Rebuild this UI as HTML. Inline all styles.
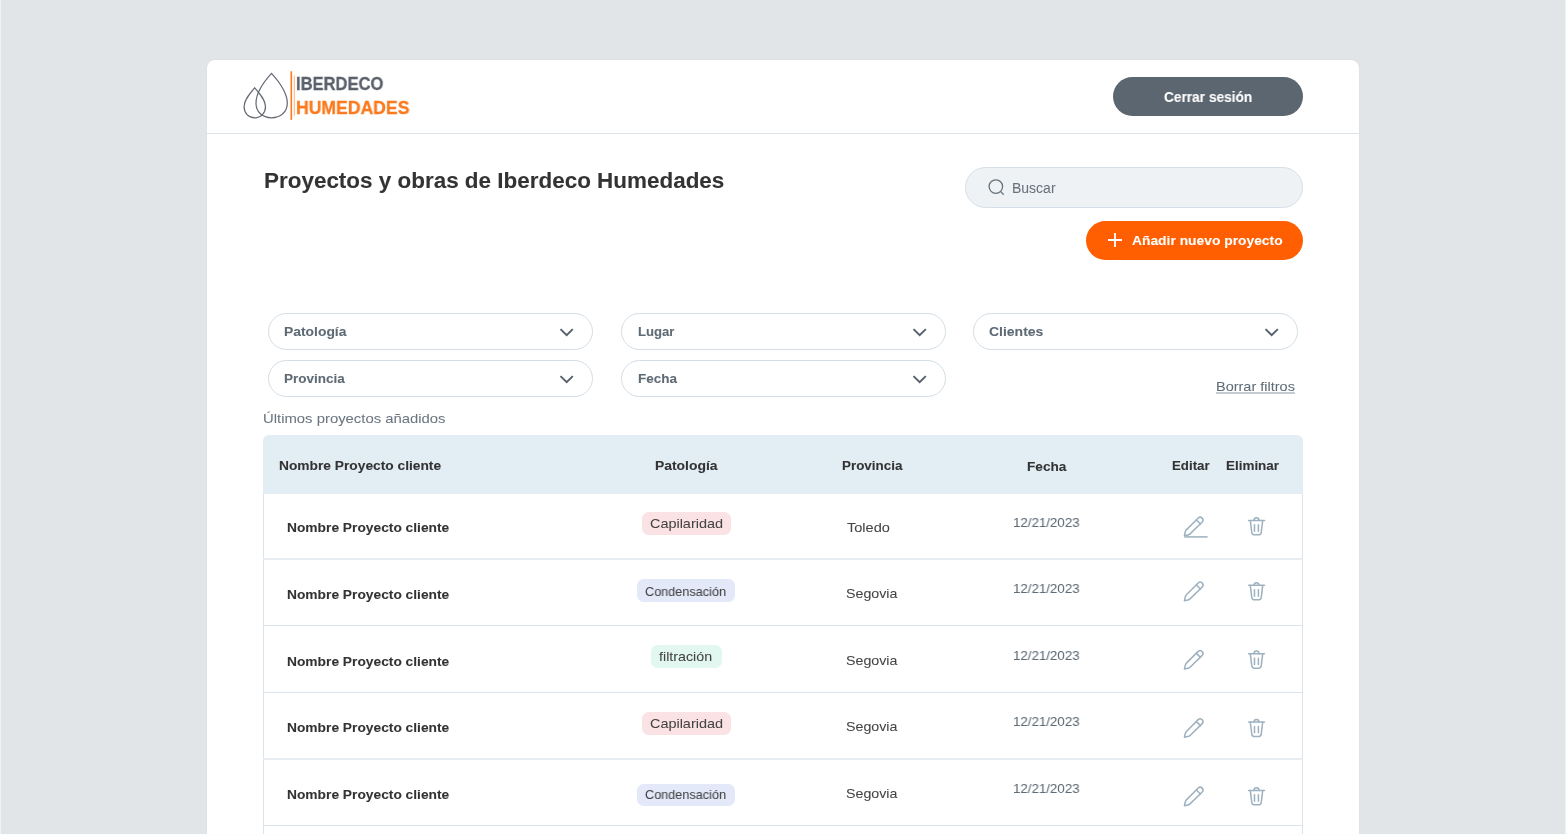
<!DOCTYPE html>
<html><head><meta charset="utf-8">
<style>
html,body{margin:0;padding:0;}
body{width:1566px;height:835px;overflow:hidden;background:#e1e5e8;position:relative;font-family:"Liberation Sans",sans-serif;}
.a{position:absolute;white-space:nowrap;}
.t{line-height:0;will-change:transform;}
.b{font-weight:bold;}
#card{position:absolute;left:207px;top:60px;width:1152px;height:800px;background:#fff;border-radius:8px;box-shadow:0 0 1.5px rgba(0,0,0,0.07);}
#hdrline{position:absolute;left:207px;top:133px;width:1152px;height:1px;background:#dde4ea;}
.btn-dark{position:absolute;left:1113px;top:77px;width:190px;height:39px;border-radius:20px;background:#5c6670;}
.search{position:absolute;left:965px;top:167px;width:336px;height:39px;border-radius:21px;background:#eef2f5;border:1px solid #d6dfe7;}
.btn-or{position:absolute;left:1086px;top:221px;width:217px;height:39px;border-radius:20px;background:#ff5f00;}
.flt{position:absolute;width:323px;height:35px;border:1px solid #d5dee6;border-radius:19px;background:#fff;}
.th{position:absolute;left:263px;top:435px;width:1040px;height:59px;background:#e2edf4;border-radius:6px 6px 0 0;}
.vl{position:absolute;top:494px;width:1px;height:340px;background:#dbe4ec;}
.hl{position:absolute;left:263px;width:1040px;height:1px;background:#dbe4ec;}
.pill{position:absolute;border-radius:6.5px;}
</style></head>
<body>
<div id="card"></div>
<div id="hdrline"></div>
<svg class="a" style="left:240px;top:68px" width="60" height="56" viewBox="0 0 60 56">
  <path d="M31.5 5.4 C25 12.5 16 24.5 16 35.2 C16 44 22.5 49.8 31.5 49.8 C40.5 49.8 47.3 44 47.3 35.2 C47.3 24.5 38 12.5 31.5 5.4 Z" fill="none" stroke="#666a74" stroke-width="1.25"/>
  <path d="M14.7 19.8 C10 25.5 4.1 31.5 4.1 38.8 C4.1 45 8.5 49.8 14.7 49.8 C21 49.8 25.5 45 25.5 38.8 C25.5 31.5 19.5 25.5 14.7 19.8 Z" fill="none" stroke="#666a74" stroke-width="1.25"/>
  <rect x="50.5" y="3.3" width="1.6" height="48.6" fill="#ff7a1f"/>
  <rect x="53.8" y="7.5" width="1" height="40.2" fill="#ffb27a"/>
</svg>
<div class="btn-dark"></div>
<div class="search"></div>
<svg class="a" style="left:986px;top:177px" width="20" height="20" viewBox="0 0 20 20">
  <circle cx="9.85" cy="9.6" r="6.75" fill="none" stroke="#68727b" stroke-width="1.3"/>
  <path d="M14.7 14.6 L17.3 17.3" stroke="#68727b" stroke-width="1.3" stroke-linecap="round"/>
</svg>
<div class="btn-or"></div>
<svg class="a" style="left:1106px;top:231px" width="18" height="18" viewBox="0 0 18 18">
  <path d="M9 2 V16 M2 9 H16" stroke="#fff" stroke-width="1.8"/>
</svg>
<div class="flt" style="left:268px;top:313px"></div>
<div class="flt" style="left:621px;top:313px"></div>
<div class="flt" style="left:973px;top:313px"></div>
<div class="flt" style="left:268px;top:360px"></div>
<div class="flt" style="left:621px;top:360px"></div>
<svg class="a" style="left:559px;top:328px" width="16" height="11" viewBox="0 0 16 11"><path d="M1.5 1.1 L7.65 7.1 L13.8 1.1" fill="none" stroke="#56616b" stroke-width="2"/></svg>
<svg class="a" style="left:912px;top:328px" width="16" height="11" viewBox="0 0 16 11"><path d="M1.5 1.1 L7.65 7.1 L13.8 1.1" fill="none" stroke="#56616b" stroke-width="2"/></svg>
<svg class="a" style="left:1264px;top:328px" width="16" height="11" viewBox="0 0 16 11"><path d="M1.5 1.1 L7.65 7.1 L13.8 1.1" fill="none" stroke="#56616b" stroke-width="2"/></svg>
<svg class="a" style="left:559px;top:375px" width="16" height="11" viewBox="0 0 16 11"><path d="M1.5 1.1 L7.65 7.1 L13.8 1.1" fill="none" stroke="#56616b" stroke-width="2"/></svg>
<svg class="a" style="left:912px;top:375px" width="16" height="11" viewBox="0 0 16 11"><path d="M1.5 1.1 L7.65 7.1 L13.8 1.1" fill="none" stroke="#56616b" stroke-width="2"/></svg>
<div class="th"></div>
<div class="vl" style="left:263px"></div>
<div class="vl" style="left:1302px"></div>
<div class="hl" style="top:558px;background:#e6ecf1"></div><div class="hl" style="top:559px;background:#e9eef3"></div>
<div class="hl" style="top:625px"></div>
<div class="hl" style="top:692px"></div>
<div class="hl" style="top:758px;background:#e6ecf1"></div><div class="hl" style="top:759px;background:#e9eef3"></div>
<div class="hl" style="top:825px"></div>
<div class="pill" style="left:642.0px;top:512.0px;width:89.0px;height:23.0px;background:#fbe3e5"></div>
<div class="pill" style="left:637.0px;top:579.0px;width:98.0px;height:23.0px;background:#e3e9f9"></div>
<div class="pill" style="left:651.0px;top:645.0px;width:71.0px;height:23.0px;background:#e2f7f0"></div>
<div class="pill" style="left:642.0px;top:712.0px;width:89.0px;height:23.0px;background:#fbe3e5"></div>
<div class="pill" style="left:637.0px;top:784.0px;width:98.0px;height:22.0px;background:#e3e9f9"></div>
<div class="a t b" id="iber" style="left:296.00px;top:84.18px;font-size:18.8px;color:#5b606b;transform:scaleX(0.881);transform-origin:0 0;-webkit-text-stroke:0.3px #5b606b;">IBERDECO</div>
<div class="a t b" id="hum" style="left:295.80px;top:108.15px;font-size:18.6px;color:#fb7a1e;transform:scaleX(0.946);transform-origin:0 0;-webkit-text-stroke:0.3px #fb7a1e;">HUMEDADES</div>
<div class="a t b" id="cerrar" style="left:1163.50px;top:96.75px;font-size:14.0px;color:#fff;transform:scaleX(0.9767);transform-origin:0 0;-webkit-text-stroke:0.08px #fff;">Cerrar sesión</div>
<div class="a t b" id="title" style="left:264.20px;top:180.55px;font-size:21.2px;color:#333;transform:scaleX(1.0594);transform-origin:0 0;-webkit-text-stroke:0.08px #333;">Proyectos y obras de Iberdeco Humedades</div>
<div class="a t" id="buscar" style="left:1012.40px;top:188.15px;font-size:14.0px;color:#68727b;transform:scaleX(0.9931);transform-origin:0 0;-webkit-text-stroke:0.05px #68727b;">Buscar</div>
<div class="a t b" id="add" style="left:1131.69px;top:240.76px;font-size:13.1px;color:#fff;transform:scaleX(1.0561);transform-origin:0 0;-webkit-text-stroke:0.08px #fff;">Añadir nuevo proyecto</div>
<div class="a t b" id="f1" style="left:284.10px;top:331.76px;font-size:13.1px;color:#5e6a74;transform:scaleX(1.0592);transform-origin:0 0;-webkit-text-stroke:0.08px #5e6a74;">Patología</div>
<div class="a t b" id="f2" style="left:637.70px;top:331.76px;font-size:13.1px;color:#5e6a74;transform:scaleX(1.0027);transform-origin:0 0;-webkit-text-stroke:0.08px #5e6a74;">Lugar</div>
<div class="a t b" id="f3" style="left:989.00px;top:331.76px;font-size:13.1px;color:#5e6a74;transform:scaleX(1.0668);transform-origin:0 0;-webkit-text-stroke:0.08px #5e6a74;">Clientes</div>
<div class="a t b" id="f4" style="left:284.10px;top:379.16px;font-size:13.1px;color:#5e6a74;transform:scaleX(1.0321);transform-origin:0 0;-webkit-text-stroke:0.08px #5e6a74;">Provincia</div>
<div class="a t b" id="f5" style="left:637.70px;top:379.16px;font-size:13.1px;color:#5e6a74;transform:scaleX(1.0316);transform-origin:0 0;-webkit-text-stroke:0.08px #5e6a74;">Fecha</div>
<div class="a t" id="borrar" style="left:1215.90px;top:386.92px;font-size:13.2px;color:#5f6b75;transform:scaleX(1.0987);transform-origin:0 0;-webkit-text-stroke:0.05px #5f6b75;text-decoration:underline;text-decoration-color:#c6ccd2;text-decoration-thickness:1.8px;text-underline-offset:1px;">Borrar filtros</div>
<div class="a t" id="ult" style="left:263.20px;top:418.86px;font-size:13.1px;color:#6b7680;transform:scaleX(1.1349);transform-origin:0 0;-webkit-text-stroke:0.05px #6b7680;">Últimos proyectos añadidos</div>
<div class="a t b" id="h1" style="left:278.50px;top:465.92px;font-size:13.2px;color:#333;transform:scaleX(1.0431);transform-origin:0 0;-webkit-text-stroke:0.08px #333;">Nombre Proyecto cliente</div>
<div class="a t b" id="h2" style="left:655.03px;top:465.92px;font-size:13.2px;color:#333;transform:scaleX(1.0537);transform-origin:0 0;-webkit-text-stroke:0.08px #333;">Patología</div>
<div class="a t b" id="h3" style="left:841.69px;top:465.92px;font-size:13.2px;color:#333;transform:scaleX(1.0169);transform-origin:0 0;-webkit-text-stroke:0.08px #333;">Provincia</div>
<div class="a t b" id="h4" style="left:1027.03px;top:466.92px;font-size:13.2px;color:#333;transform:scaleX(1.0339);transform-origin:0 0;-webkit-text-stroke:0.08px #333;">Fecha</div>
<div class="a t b" id="h5" style="left:1172.00px;top:465.92px;font-size:13.2px;color:#333;transform:scaleX(1.0080);transform-origin:0 0;-webkit-text-stroke:0.08px #333;">Editar</div>
<div class="a t b" id="h6" style="left:1225.60px;top:465.92px;font-size:13.2px;color:#333;transform:scaleX(1.0192);transform-origin:0 0;-webkit-text-stroke:0.08px #333;">Eliminar</div>
<div class="a t b" id="nm0" style="left:286.80px;top:527.76px;font-size:13.1px;color:#333;transform:scaleX(1.0518);transform-origin:0 0;-webkit-text-stroke:0.08px #333;">Nombre Proyecto cliente</div>
<div class="a t" id="pt0" style="left:649.50px;top:523.79px;font-size:13.0px;color:#444;transform:scaleX(1.1096);transform-origin:0 0;-webkit-text-stroke:0.05px #444;">Capilaridad</div>
<div class="a t" id="pv0" style="left:846.70px;top:527.66px;font-size:13.1px;color:#444;transform:scaleX(1.1114);transform-origin:0 0;-webkit-text-stroke:0.05px #444;">Toledo</div>
<div class="a t" id="dt0" style="left:1013.31px;top:523.08px;font-size:13.6px;color:#5f6b75;transform:scaleX(0.9784);transform-origin:0 0;-webkit-text-stroke:0.05px #5f6b75;">12/21/2023</div>
<div class="a t b" id="nm1" style="left:286.80px;top:594.96px;font-size:13.1px;color:#333;transform:scaleX(1.0518);transform-origin:0 0;-webkit-text-stroke:0.08px #333;">Nombre Proyecto cliente</div>
<div class="a t" id="pt1" style="left:644.70px;top:591.59px;font-size:13.0px;color:#444;transform:scaleX(0.9747);transform-origin:0 0;-webkit-text-stroke:0.05px #444;">Condensación</div>
<div class="a t" id="pv1" style="left:846.00px;top:594.06px;font-size:13.1px;color:#444;transform:scaleX(1.0865);transform-origin:0 0;-webkit-text-stroke:0.05px #444;">Segovia</div>
<div class="a t" id="dt1" style="left:1013.31px;top:589.08px;font-size:13.6px;color:#5f6b75;transform:scaleX(0.9784);transform-origin:0 0;-webkit-text-stroke:0.05px #5f6b75;">12/21/2023</div>
<div class="a t b" id="nm2" style="left:286.80px;top:661.76px;font-size:13.1px;color:#333;transform:scaleX(1.0518);transform-origin:0 0;-webkit-text-stroke:0.08px #333;">Nombre Proyecto cliente</div>
<div class="a t" id="pt2" style="left:659.00px;top:657.09px;font-size:13.0px;color:#444;transform:scaleX(1.0971);transform-origin:0 0;-webkit-text-stroke:0.05px #444;">filtración</div>
<div class="a t" id="pv2" style="left:846.00px;top:660.76px;font-size:13.1px;color:#444;transform:scaleX(1.0865);transform-origin:0 0;-webkit-text-stroke:0.05px #444;">Segovia</div>
<div class="a t" id="dt2" style="left:1013.31px;top:656.48px;font-size:13.6px;color:#5f6b75;transform:scaleX(0.9784);transform-origin:0 0;-webkit-text-stroke:0.05px #5f6b75;">12/21/2023</div>
<div class="a t b" id="nm3" style="left:286.80px;top:728.26px;font-size:13.1px;color:#333;transform:scaleX(1.0518);transform-origin:0 0;-webkit-text-stroke:0.08px #333;">Nombre Proyecto cliente</div>
<div class="a t" id="pt3" style="left:649.50px;top:723.99px;font-size:13.0px;color:#444;transform:scaleX(1.1096);transform-origin:0 0;-webkit-text-stroke:0.05px #444;">Capilaridad</div>
<div class="a t" id="pv3" style="left:846.00px;top:726.96px;font-size:13.1px;color:#444;transform:scaleX(1.0865);transform-origin:0 0;-webkit-text-stroke:0.05px #444;">Segovia</div>
<div class="a t" id="dt3" style="left:1013.31px;top:722.28px;font-size:13.6px;color:#5f6b75;transform:scaleX(0.9784);transform-origin:0 0;-webkit-text-stroke:0.05px #5f6b75;">12/21/2023</div>
<div class="a t b" id="nm4" style="left:286.80px;top:794.96px;font-size:13.1px;color:#333;transform:scaleX(1.0518);transform-origin:0 0;-webkit-text-stroke:0.08px #333;">Nombre Proyecto cliente</div>
<div class="a t" id="pt4" style="left:644.70px;top:794.99px;font-size:13.0px;color:#444;transform:scaleX(0.9747);transform-origin:0 0;-webkit-text-stroke:0.05px #444;">Condensación</div>
<div class="a t" id="pv4" style="left:846.00px;top:793.96px;font-size:13.1px;color:#444;transform:scaleX(1.0865);transform-origin:0 0;-webkit-text-stroke:0.05px #444;">Segovia</div>
<div class="a t" id="dt4" style="left:1013.31px;top:788.88px;font-size:13.6px;color:#5f6b75;transform:scaleX(0.9784);transform-origin:0 0;-webkit-text-stroke:0.05px #5f6b75;">12/21/2023</div>
<svg class="a" style="left:0;top:0" width="1566" height="835" viewBox="0 0 1566 835"><defs><g id="pen" fill="none" stroke="#9db1bf" stroke-width="1.5" stroke-linejoin="round" stroke-linecap="round"><path d="M1198.2 583 L1186.4 594.8 Q1185.5 595.8 1185.2 597.2 L1184.4 600.7 L1187.9 599.9 Q1189.3 599.6 1190.3 598.6 L1202.2 587 A2.83 2.83 0 0 0 1198.2 583 Z"/><path d="M1196.4 585 L1200.4 589"/></g><g id="trash" fill="none" stroke="#9db1bf" stroke-width="1.5" stroke-linecap="round" stroke-linejoin="round"><path d="M1248.7 585.35 H1264.5"/><path d="M1254 585.35 A2.5 2.6 0 0 1 1259 585.35"/><path d="M1250.3 585.6 L1251.8 597.6 Q1252.2 599.8 1254.4 599.8 H1258.6 Q1260.8 599.8 1261.2 597.6 L1262.7 585.6"/><path d="M1254.5 589.8 V596.2 M1258.4 589.8 V596.2"/></g></defs><use href="#pen" y="-64.95"/><path d="M1184.3 536.9 H1207.6" stroke="#9db1bf" stroke-width="1.5"/><use href="#trash" y="-64.95"/><use href="#pen" y="0.00"/><use href="#trash" y="0.00"/><use href="#pen" y="68.35"/><use href="#trash" y="68.35"/><use href="#pen" y="136.65"/><use href="#trash" y="136.65"/><use href="#pen" y="205.05"/><use href="#trash" y="205.05"/></svg>
<div class="a" style="left:0;top:0;width:1px;height:835px;background:#f0f2f4"></div>
<div class="a" style="left:1565px;top:0;width:1px;height:835px;background:#eff1f3"></div>
<div class="a" style="left:0;top:834px;width:1566px;height:1px;background:#fcfcfd"></div>
</body></html>
